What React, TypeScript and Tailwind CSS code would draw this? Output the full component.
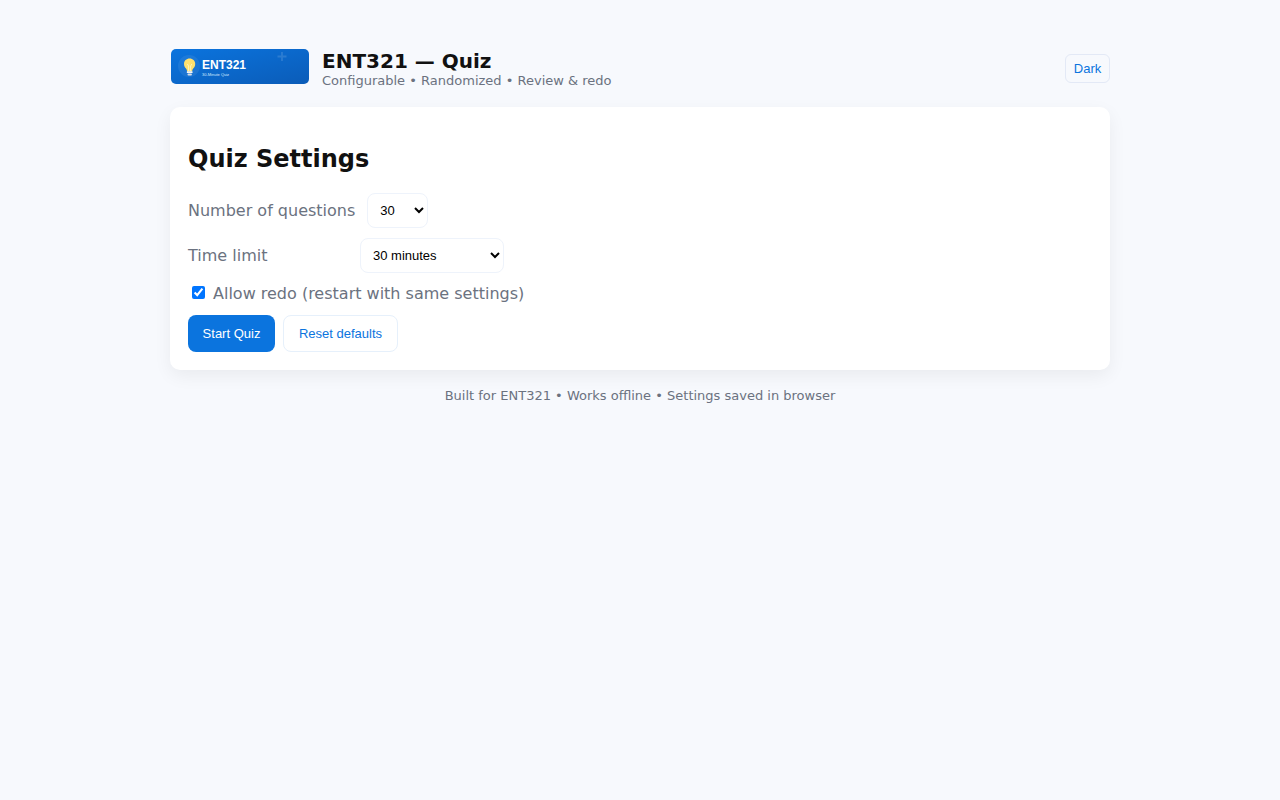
import { useState } from "react";

const DefaultCount = "30";
const DefaultTime = "30";

const counts = ["10", "20", "30", "40", "50"];
const times = [
  { value: "0", label: "No limit" },
  { value: "15", label: "15 minutes" },
  { value: "30", label: "30 minutes" },
  { value: "60", label: "60 minutes" },
];

const selectStyle =
  "h-[35px] rounded-lg border border-[#eef3fb] bg-white px-2 font-['Liberation_Sans',Arial,sans-serif] text-[13px] text-black";

function Logo() {
  return (
    <svg
      width="140"
      height="36"
      viewBox="0 0 140 36"
      role="img"
      aria-label="ENT321"
      className="shrink-0"
    >
      <defs>
        <linearGradient id="logo-bg" x1="0" y1="0" x2="1" y2="1">
          <stop offset="0" stopColor="#0b74de" />
          <stop offset="1" stopColor="#0b5cb8" />
        </linearGradient>
      </defs>
      <rect x="1" y="1" width="138" height="35" rx="5" fill="url(#logo-bg)" />
      <circle cx="19" cy="18" r="11" fill="#fff" opacity="0.07" />
      <path
        d="M19.6 10.500c-3.200 0-5.600 2.300-5.600 5.400 0 2.100 1 3.400 2 4.600.7.900 1 1.700 1.100 2.900h5c.1-1.200.4-2 1.100-2.900 1-1.200 2-2.500 2-4.600 0-3.100-2.400-5.400-5.600-5.400z"
        fill="#ffe16e"
      />
      <path
        d="M18.600 23v-5l-1.200-2M20.600 23v-5l1.200-2"
        fill="none"
        stroke="#fff6c4"
        strokeWidth="0.900"
      />
      <rect x="16.800" y="23.300" width="5.800" height="1.700" rx="0.600" fill="#f1f4f8" />
      <rect x="17.500" y="25.500" width="4.400" height="1.900" rx="0.900" fill="#d5dfea" />
      <text
        x="32"
        y="21"
        fontFamily="'Liberation Sans', Arial, sans-serif"
        fontSize="12"
        fontWeight="700"
        fill="#fff"
      >
        ENT321
      </text>
      <text
        x="32"
        y="28"
        fontFamily="'Liberation Sans', Arial, sans-serif"
        fontSize="4"
        fill="#dcecff"
      >
        30-Minute Quiz
      </text>
      <path d="M112 4v9M107.500 8.500h9" stroke="#fff" strokeWidth="1.800" opacity="0.130" />
    </svg>
  );
}

export default function App() {
  const [count, setCount] = useState(DefaultCount);
  const [time, setTime] = useState(DefaultTime);
  const [allowRedo, setAllowRedo] = useState(true);
  const [dark, setDark] = useState(false);

  function resetDefaults() {
    setCount(DefaultCount);
    setTime(DefaultTime);
    setAllowRedo(true);
  }

  return (
    <div
      className={`min-h-screen px-5 py-12 font-['DejaVu_Sans',sans-serif] ${
        dark ? "bg-[#0b1220] text-gray-100" : "bg-[#f7f9fd] text-[#111111]"
      }`}
    >
      <div className="mx-auto max-w-[940px]">
        <header className="flex items-center justify-between">
          <div className="flex items-start gap-3">
            <Logo />
            <div className="pt-0.5">
              <h1 className="text-xl leading-[23px] font-bold">ENT321 — Quiz</h1>
              <p className="text-[13px] leading-4 text-[#6b7280]">
                Configurable • Randomized • Review &amp; redo
              </p>
            </div>
          </div>
          <button
            type="button"
            onClick={() => setDark(!dark)}
            className="h-[29px] min-w-[45px] rounded-md border border-[#e3e9f6] px-[7px] font-['Liberation_Sans',Arial,sans-serif] text-[13px] text-[#0b74de]"
          >
            {dark ? "Light" : "Dark"}
          </button>
        </header>

        <main
          className={`mt-[18px] rounded-[10px] p-[18px] shadow-[0_6px_18px_rgba(0,0,0,0.06)] ${
            dark ? "bg-[#0f1a2e]" : "bg-white"
          }`}
        >
          <h2 className="my-5 text-2xl leading-7 font-bold">Quiz Settings</h2>
          <div className="flex flex-col gap-2.5 text-base text-[#6b7280]">
            <div className="flex items-center gap-3">
              <label htmlFor="count" className="min-w-[160px]">
                Number of questions
              </label>
              <select
                id="count"
                value={count}
                onChange={(e) => setCount(e.target.value)}
                className={`${selectStyle} w-[61px]`}
              >
                {counts.map((c) => (
                  <option key={c} value={c}>
                    {c}
                  </option>
                ))}
              </select>
            </div>
            <div className="flex items-center gap-3">
              <label htmlFor="time" className="min-w-[160px]">
                Time limit
              </label>
              <select
                id="time"
                value={time}
                onChange={(e) => setTime(e.target.value)}
                className={`${selectStyle} w-36`}
              >
                {times.map((t) => (
                  <option key={t.value} value={t.value}>
                    {t.label}
                  </option>
                ))}
              </select>
            </div>
            <label className="flex items-start gap-2 pl-1 leading-[22px]">
              <input
                type="checkbox"
                checked={allowRedo}
                onChange={(e) => setAllowRedo(e.target.checked)}
                className="mt-[3px] size-[13px]"
              />
              Allow redo (restart with same settings)
            </label>
            <div className="flex gap-2 font-['Liberation_Sans',Arial,sans-serif] text-[13px]">
              <button
                type="button"
                className="h-[37px] min-w-[87px] rounded-lg bg-[#0b74de] px-3.5 text-white"
              >
                Start Quiz
              </button>
              <button
                type="button"
                onClick={resetDefaults}
                className="h-[37px] min-w-[115px] rounded-lg border border-[#e6f0fb] px-3.5 text-[#0b74de]"
              >
                Reset defaults
              </button>
            </div>
          </div>
        </main>

        <footer className="mt-[18px] text-center text-[13px] leading-4 text-[#6b7280]">
          Built for ENT321 • Works offline • Settings saved in browser
        </footer>
      </div>
    </div>
  );
}
